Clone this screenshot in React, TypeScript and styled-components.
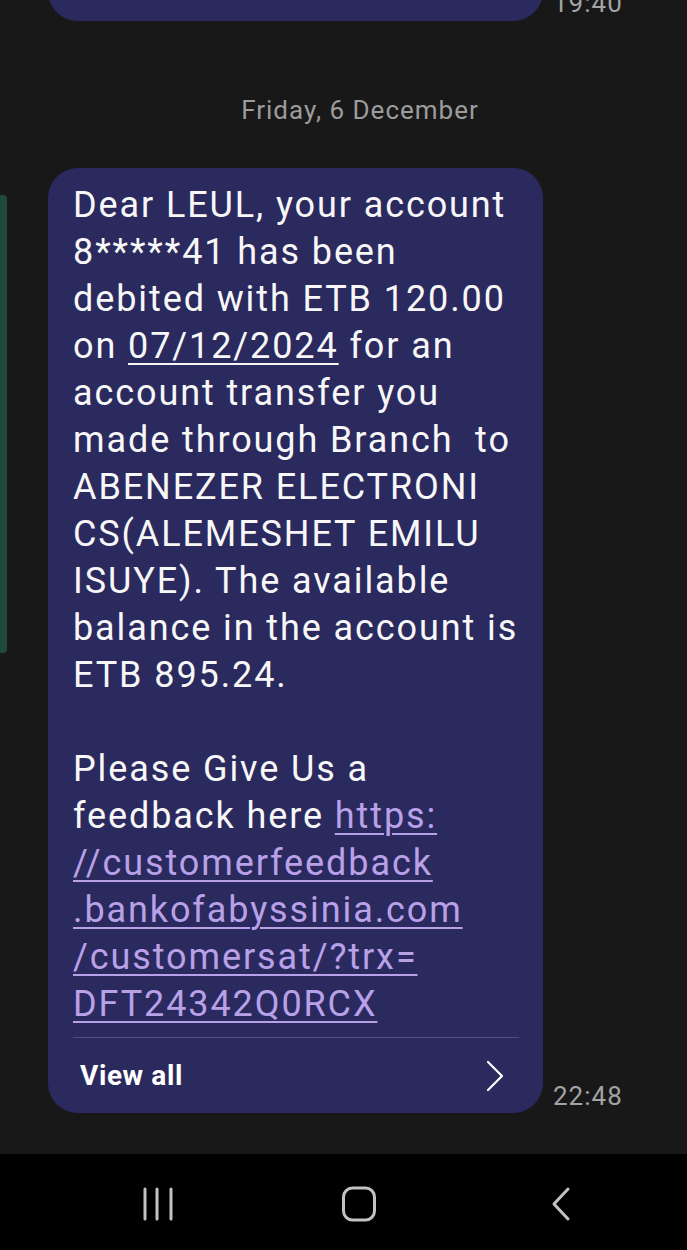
import React from "react";
import styled, { createGlobalStyle } from "styled-components";

const Global = createGlobalStyle`
  html, body { margin: 0; padding: 0; background: #181818; }
  body { font-family: Roboto, "Noto Sans", Arial, sans-serif; }
`;

const Screen = styled.div`
  width: 687px;
  height: 1250px;
  display: flex;
  flex-direction: column;
  background: #181818;
  overflow: hidden;
  position: relative;
`;

const Thread = styled.div`
  height: 1154px;
  display: flex;
  flex-direction: column;
  overflow: hidden;
`;

const Row = styled.div<{ $top?: number }>`
  display: flex;
  align-items: flex-end;
  gap: 10px;
  padding-left: 48px;
  margin-top: ${(p) => p.$top ?? 0}px;
`;

const Bubble = styled.div<{ $h?: number }>`
  width: 495px;
  flex-shrink: 0;
  box-sizing: border-box;
  background: #2b2a5f;
  border-radius: 30px;
  ${(p) => (p.$h ? `height: ${p.$h}px;` : "")}
  padding: 14px 24px 0 25px;
  display: flex;
  flex-direction: column;
`;

const Time = styled.div<{ $shift?: number }>`
  font-size: 26px;
  line-height: 30px;
  letter-spacing: 1px;
  color: #a3a3a3;
  margin-bottom: ${(p) => p.$shift ?? 0}px;
`;

const DateLabel = styled.div`
  margin-top: 71px;
  height: 36px;
  line-height: 36px;
  font-size: 26px;
  letter-spacing: 1px;
  color: #9c9c9c;
  text-align: center;
  padding-left: 33px;
`;

const Body = styled.div`
  color: #f7f7f7;
  font-size: 36px;
  line-height: 47px;
  letter-spacing: 1.9px;
`;

const Line = styled.div`
  white-space: pre;
  height: 47px;
`;

const Under = styled.span`
  text-decoration: underline;
  text-decoration-thickness: 2px;
  text-underline-offset: 5px;
`;

const Link = styled.span`
  color: #b9a1e8;
  text-decoration: underline;
  text-decoration-thickness: 2px;
  text-underline-offset: 5px;
`;

const Divider = styled.div`
  margin-top: 9px;
  height: 1px;
  background: #4e4d86;
`;

const ViewAll = styled.div`
  height: 75px;
  display: flex;
  align-items: center;
  justify-content: space-between;
  padding: 0 14px 0 7px;
  color: #ffffff;
  font-size: 28px;
  font-weight: 700;
  letter-spacing: 0.6px;
`;

const Scroll = styled.div`
  position: absolute;
  left: 0;
  top: 195px;
  width: 7px;
  height: 458px;
  background: #1f4a39;
  border-radius: 0 4px 4px 0;
`;

const NavBar = styled.div`
  height: 96px;
  background: #000000;
  display: flex;
  align-items: center;
  gap: 161px;
  padding-left: 138px;
  padding-top: 4px;
  box-sizing: border-box;
`;

const NavBtn = styled.div`
  width: 40px;
  height: 40px;
  display: flex;
  align-items: center;
  justify-content: center;
`;

const bodyLines: React.ReactNode[] = [
  "Dear LEUL, your account",
  "8*****41 has been",
  "debited with ETB 120.00",
  <>on <Under>07/12/2024</Under> for an</>,
  "account transfer you",
  "made through Branch  to",
  "ABENEZER ELECTRONI",
  "CS(ALEMESHET EMILU",
  "ISUYE). The available",
  "balance in the account is",
  "ETB 895.24.",
  "",
  "Please Give Us a",
  <>feedback here <Link>https:</Link></>,
  <Link>//customerfeedback</Link>,
  <Link>.bankofabyssinia.com</Link>,
  <Link>/customersat/?trx=</Link>,
  <Link>DFT24342Q0RCX</Link>,
];

export default function App() {
  return (
    <>
      <Global />
      <Screen>
        <Thread>
          <Row $top={-40}>
            <Bubble $h={61} />
            <Time $shift={3}>19:40</Time>
          </Row>
          <DateLabel>Friday, 6 December</DateLabel>
          <Row $top={40}>
            <Bubble>
              <Body>
                {bodyLines.map((l, i) => (
                  <Line key={i}>{l}</Line>
                ))}
              </Body>
              <Divider />
              <ViewAll>
                <span>View all</span>
                <svg width="20" height="32" viewBox="0 0 20 32">
                  <path d="M3 2 L17 16 L3 30" fill="none" stroke="#ffffff" strokeWidth="2.2" strokeLinecap="round" strokeLinejoin="round" />
                </svg>
              </ViewAll>
            </Bubble>
            <Time $shift={2}>22:48</Time>
          </Row>
        </Thread>
        <NavBar>
          <NavBtn>
            <svg width="40" height="36" viewBox="0 0 40 36">
              <g stroke="#c2c2c2" strokeWidth="3" strokeLinecap="round">
                <line x1="7" y1="3" x2="7" y2="33" />
                <line x1="19" y1="3" x2="19" y2="33" />
                <line x1="33" y1="3" x2="33" y2="33" />
              </g>
            </svg>
          </NavBtn>
          <NavBtn>
            <svg width="40" height="36" viewBox="0 0 40 36">
              <rect x="4.5" y="2" width="31" height="32" rx="9" fill="none" stroke="#c2c2c2" strokeWidth="3" />
            </svg>
          </NavBtn>
          <NavBtn>
            <svg width="40" height="36" viewBox="0 0 40 36">
              <path d="M28 3 L14 18 L28 33" fill="none" stroke="#c2c2c2" strokeWidth="3" strokeLinecap="round" strokeLinejoin="round" />
            </svg>
          </NavBtn>
        </NavBar>
        <Scroll />
      </Screen>
    </>
  );
}
